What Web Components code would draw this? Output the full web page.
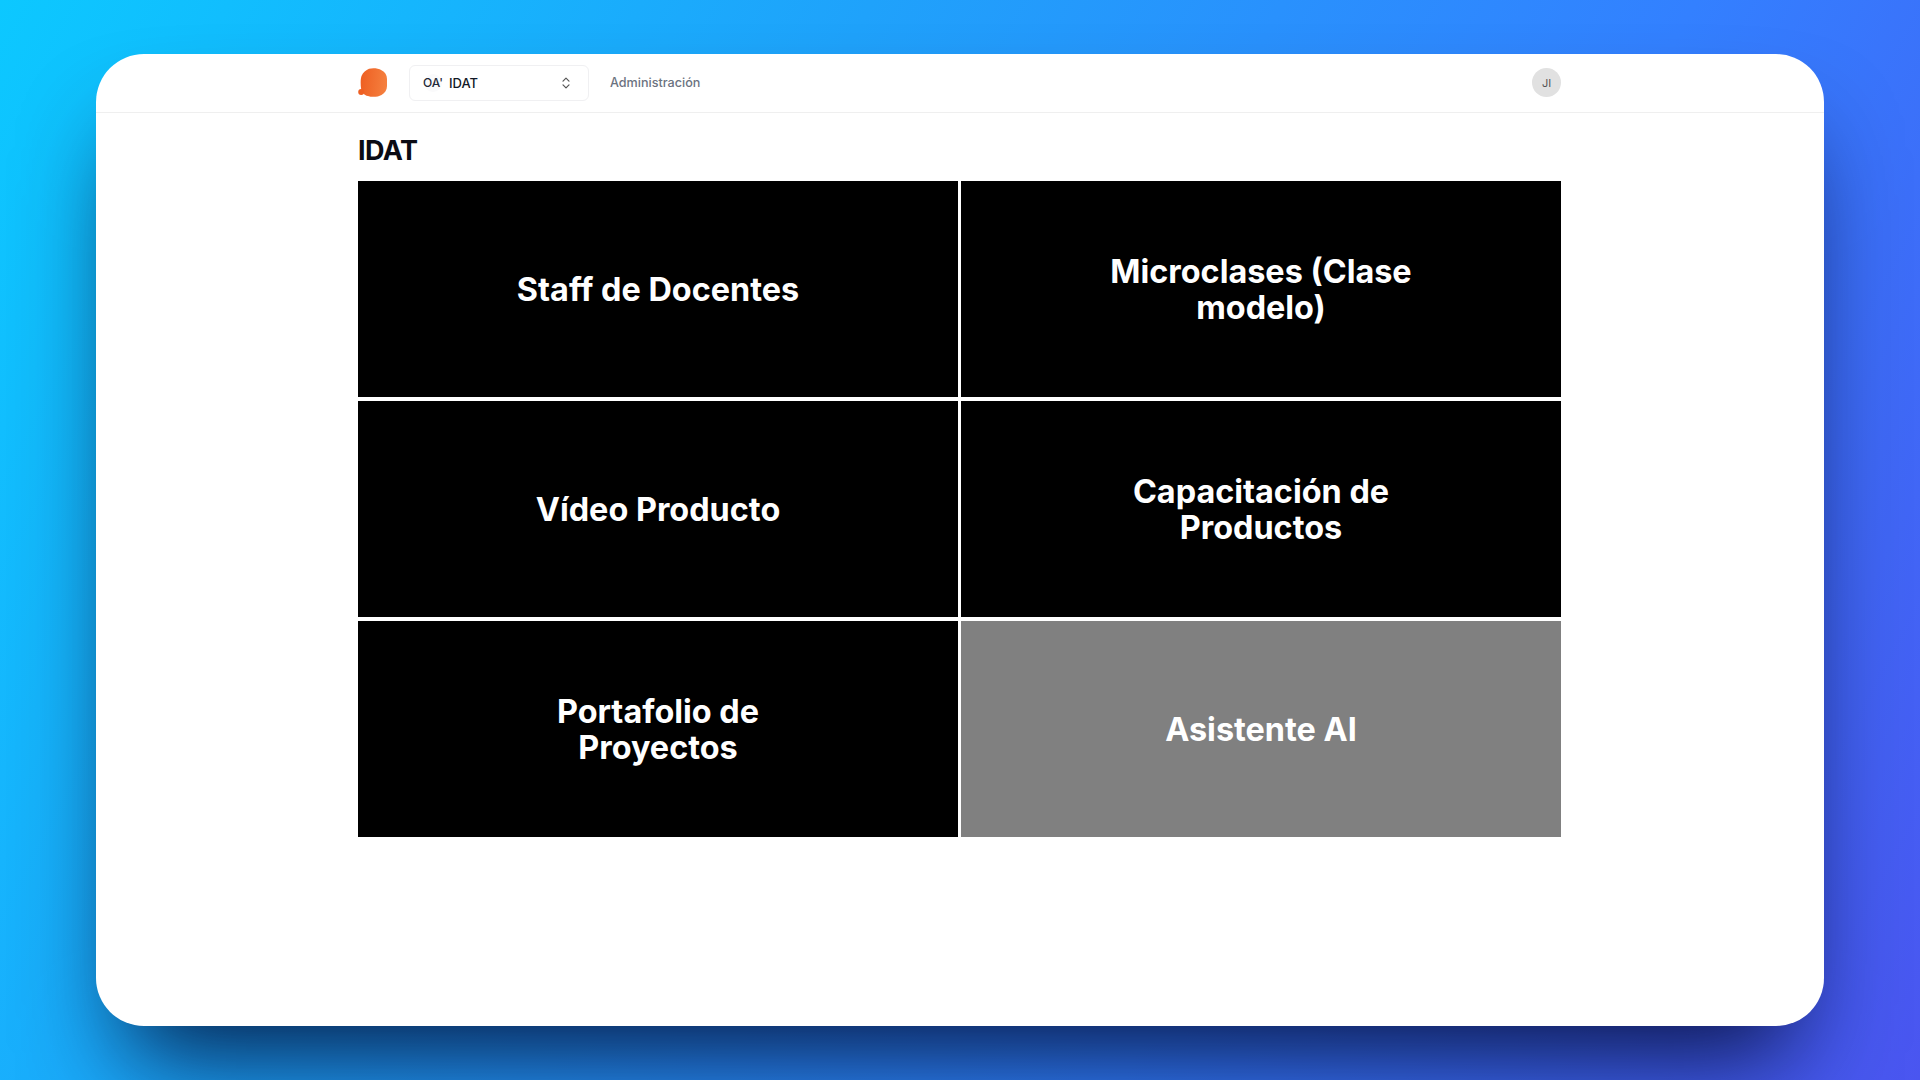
<!DOCTYPE html>
<html lang="es">
<head>
<meta charset="utf-8">
<title>IDAT</title>
<style>
html,body{margin:0;height:100%}
body{width:1920px;height:1080px;overflow:hidden;box-sizing:border-box;padding:54px 96px;font-family:Inter,"Liberation Sans",sans-serif;
background:linear-gradient(118deg,#0cc8ff 0%,#1fa2fb 35%,#3380ff 68%,#4a55f0 100%)}
</style>
</head>
<body>
<app-window>
  <app-nav slot="nav"></app-nav>
  <app-page heading="IDAT">
    <tile-card>Staff de Docentes</tile-card>
    <tile-card>Microclases (Clase modelo)</tile-card>
    <tile-card>Vídeo Producto</tile-card>
    <tile-card>Capacitación de Productos</tile-card>
    <tile-card>Portafolio de Proyectos</tile-card>
    <tile-card disabled>Asistente AI</tile-card>
  </app-page>
</app-window>
<script>
function def(name, html, init){
  customElements.define(name, class extends HTMLElement{
    constructor(){super();this.attachShadow({mode:'open'}).innerHTML=html;}
    connectedCallback(){init&&init.call(this);}
  });
}
def('app-window',`<style>
:host{display:flex;flex-direction:column;width:1728px;height:972px;background:#fff;border-radius:48px;
box-shadow:0 60px 100px -30px rgba(0,5,40,.85);overflow:visible}
</style><slot name="nav"></slot><slot></slot>`);
def('app-nav',`<style>
:host{display:flex;align-items:center;box-sizing:border-box;height:59px;padding:0 263px 1px 262px;border-bottom:1px solid #efefef;flex:none}
.logo{width:29px;height:30px;flex:none;margin-right:22px;display:block}
.sel{width:180px;height:36px;box-sizing:border-box;border:1px solid #f0f0f2;border-radius:6px;display:flex;align-items:center;padding:0 14px;font-size:13px;font-weight:500;color:#111827}
.ava{width:18px;height:18px;border-radius:50%;background:#fafafb;display:flex;justify-content:center;white-space:nowrap;line-height:18px;font-size:12px;color:#1f2937;margin-right:7px;flex:none}
.name{flex:1}
svg.ch{width:14px;height:14px;margin-right:1px;display:block}
.link{margin-left:21px;font-size:12.6px;font-weight:500;color:#6b7280}
.sp{flex:1}
.user{width:29px;height:29px;border-radius:50%;background:#e1e1e1;color:#555;font-size:11px;display:flex;align-items:center;justify-content:center}
</style>
<svg class="logo" viewBox="0 0 29 30"><defs><linearGradient id="g" x1="0" x2="1" y1="0.3" y2="0.4"><stop offset="0" stop-color="#ee5f22"/><stop offset="1" stop-color="#f5803f"/></linearGradient></defs>
<path fill="url(#g)" d="M11 .8C15-.2 20 .2 23.5 2.2 27 4 29 7 29 11V18C29 22 27 25 23.5 27 20 29 14 29.5 10 28 6 27.5 3.5 24 3 20 2.5 16 2.5 11 3.5 8 5 4.5 8 2 11 .8Z"/><circle cx="3.2" cy="24" r="3" fill="#ee5f22"/></svg>
<div class="sel"><span class="ava">OA'</span><span class="name">IDAT</span>
<svg class="ch" viewBox="0 0 14 14" fill="none" stroke="#555" stroke-width="1.2" stroke-linecap="round" stroke-linejoin="round"><path d="M4 5.2 7 2.2 10 5.2M4 8.8 7 11.8 10 8.8"/></svg></div>
<span class="link">Administración</span><span class="sp"></span><span class="user">JI</span>`);
def('app-page',`<style>
:host{display:block;padding:0 263px 0 262px;flex:1}
h1{margin:0;height:68px;box-sizing:border-box;padding-top:22px;font-size:27px;line-height:32px;font-weight:700;color:#0b0b14;letter-spacing:-.6px}
.grid{display:grid;grid-template-columns:1fr 1fr;grid-auto-rows:216px;gap:4px 3px}
</style><h1></h1><div class="grid"><slot></slot></div>`,function(){this.shadowRoot.querySelector('h1').textContent=this.getAttribute('heading');});
def('tile-card',`<style>
:host{display:flex;align-items:center;justify-content:center;box-sizing:border-box;background:#000;color:#fff;font-size:32.4px;line-height:36px;font-weight:700;text-align:center;padding:2px 125px 0}
:host([disabled]){background:#808080}
</style><span><slot></slot></span>`);
</script>
</body>
</html>
